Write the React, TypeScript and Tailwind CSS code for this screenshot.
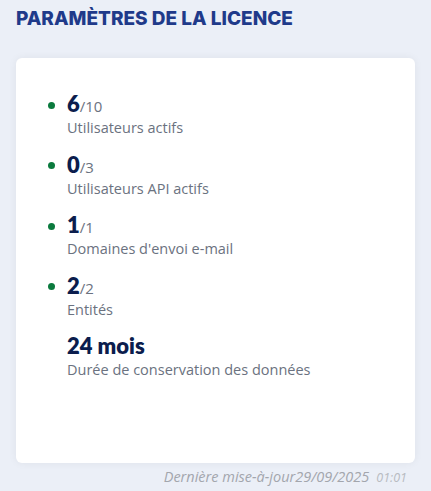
import React from "react";

const items = [
  { n: "6", t: "/10", label: "Utilisateurs actifs", dot: true },
  { n: "0", t: "/3", label: "Utilisateurs API actifs", dot: true },
  { n: "1", t: "/1", label: "Domaines d'envoi e-mail", dot: true },
  { n: "2", t: "/2", label: "Entités", dot: true },
  { n: "24 mois", t: "", label: "Durée de conservation des données", dot: false },
];

export default function App() {
  return (
    <div className="w-[431px] h-[491px] bg-[#ebeff7] px-4 pt-[7px]" style={{ fontFamily: "'Open Sans', 'Noto Sans', sans-serif" }}>
      <h1 className="text-[19px] leading-[24px] font-extrabold text-[#1f3a8a]" style={{ fontFamily: "Inter, sans-serif" }}>
        PARAMÈTRES DE LA LICENCE
      </h1>
      <div className="mt-[27px] h-[405px] bg-white rounded-[6px] shadow-[0_0_8px_rgba(0,0,0,0.06)] pt-[32px] pl-8 flex flex-col gap-[12.5px]">
        {items.map((it) => (
          <div key={it.label} className="flex items-start gap-[11px]">
            <div className="w-2 h-7 flex items-center">
              {it.dot && <span className="w-[7px] h-[7px] rounded-full bg-[#0b7a3e] block mt-[2px]" />}
            </div>
            <div className="flex flex-col">
              <div className="h-7 leading-7">
                <span className="text-[22px] text-[#0b1d4d]" style={{ fontFamily: "Lato, sans-serif", fontWeight: 800 }}>{it.n}</span>
                <span className="text-[15px] text-[#6b7280]">{it.t}</span>
              </div>
              <div className="text-[14.5px] leading-5 text-[#6b7280]">{it.label}</div>
            </div>
          </div>
        ))}
      </div>
      <div className="flex justify-end items-baseline gap-[7px] pr-[8px] mt-[3px] italic">
        <span className="text-[14.5px] text-[#a3a6ad]">Dernière mise-à-jour29/09/2025</span>
        <span className="text-[12.5px] text-[#b8bbc1]">01:01</span>
      </div>
    </div>
  );
}
